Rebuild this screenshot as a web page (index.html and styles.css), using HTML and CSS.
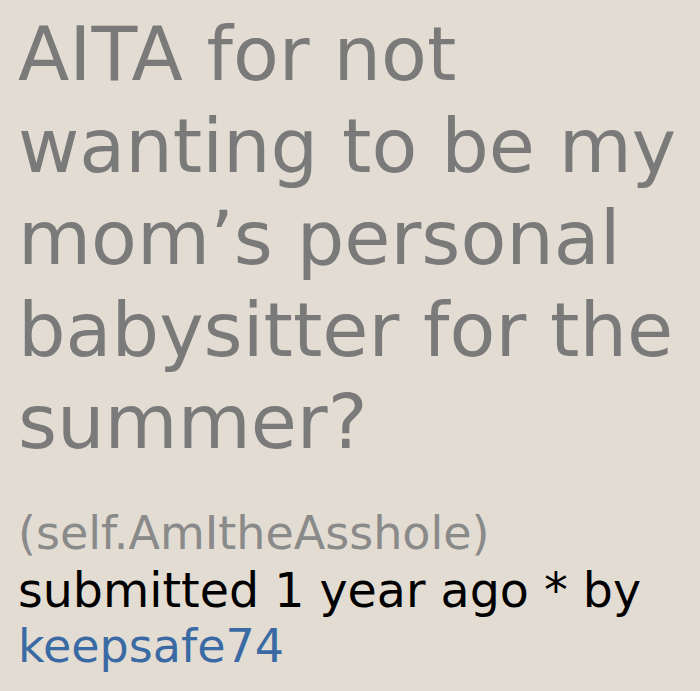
FILE: index.html
```html
<!DOCTYPE html>
<html lang="en">
<head>
<meta charset="utf-8">
<title>AITA post</title>
<link rel="stylesheet" href="styles.css">
</head>
<body>
<div class="post">
  <h1 class="title">AITA for not wanting to be my mom’s personal babysitter for the summer?</h1>
  <div class="meta">
    <div class="domain">(self.AmItheAsshole)</div>
    <div class="tagline">submitted 1 year ago * by</div>
    <a class="author" href="#">keepsafe74</a>
  </div>
</div>
</body>
</html>
```

FILE: styles.css
```css
html, body {
  background: #e3dcd3;
}
body {
  margin: 8px;
  font-family: "DejaVu Sans", Verdana, sans-serif;
}
.post {
  padding-left: 10px;
}
.title {
  margin: 0;
  font-weight: normal;
  font-size: 75px;
  line-height: 92px;
  color: #7a7a7a;
}
.meta {
  margin-top: 35px;
  display: flex;
  flex-direction: column;
  align-items: flex-start;
}
.domain {
  font-size: 46px;
  line-height: 60px;
  color: #8a8a8a;
}
.tagline {
  font-size: 47.5px;
  line-height: 56px;
  color: #000;
}
.author {
  font-size: 46px;
  line-height: 54px;
  color: #3a6aa3;
  text-decoration: none;
}
```
